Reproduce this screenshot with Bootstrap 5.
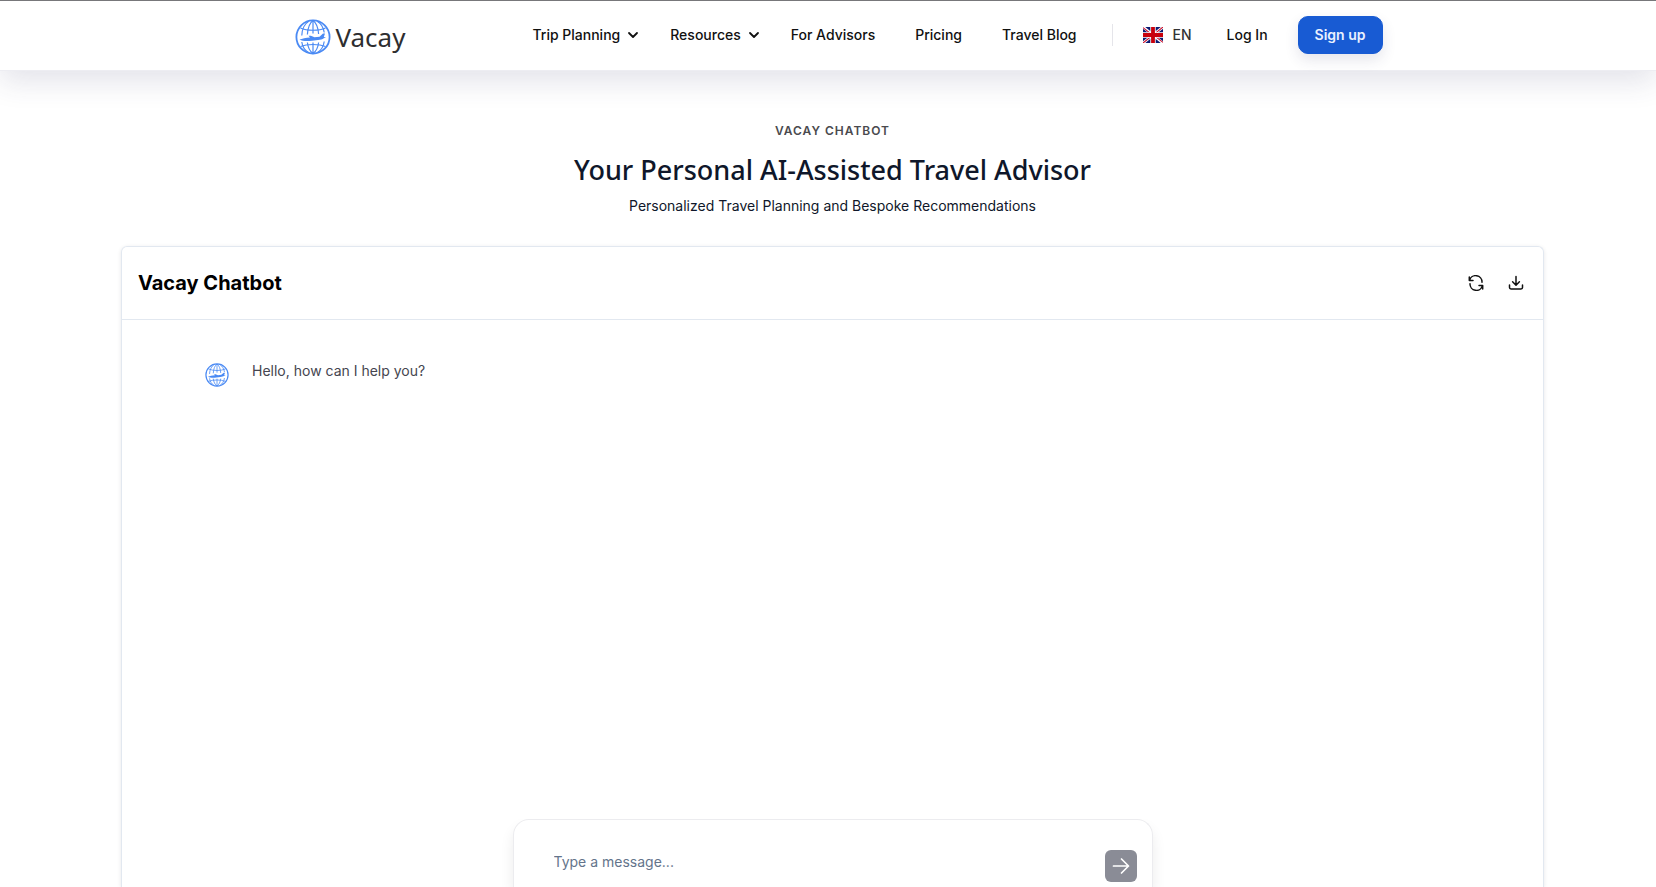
<!DOCTYPE html>
<html lang="en">
<head>
<meta charset="utf-8">
<meta name="viewport" content="width=device-width, initial-scale=1">
<title>Vacay Chatbot</title>
<link href="https://cdn.jsdelivr.net/npm/bootstrap@5.3.0/dist/css/bootstrap.min.css" rel="stylesheet">
<style>
  body { font-family: Inter, "Liberation Sans", sans-serif; font-size: 14px; line-height: 20px; color: #0f172a; background: #fff; }
  a, a:hover { color: #111; text-decoration: none; }
  .site-header { height: 71px; border-top: 1px solid #77777a; border-bottom: 1px solid #ededf2; padding: 0 0 2px 22px; font-weight: 500; box-shadow: 0 10px 30px rgba(50, 50, 100, .14); }
  .brand { margin: 5px 127px 0 0; gap: 4px; }
  .brand-name { font: 400 26px/36px "Noto Sans", sans-serif; color: #2e2e30; }
  .menu { gap: 40px; }
  .menu-item { gap: 7px; }
  .has-sub { margin-right: -9px; }
  .rule { width: 1px; height: 22px; background: #e5e5ea; margin: 0 30px 0 35px; }
  .lang { gap: 10px; margin-right: 35px; background: none; border: 0; padding: 0; font-weight: 500; color: #333; }
  .signup { --bs-btn-color: #eaf2ff; --bs-btn-bg: #185bd3; --bs-btn-border-color: #185bd3; --bs-btn-hover-color: #fff; --bs-btn-hover-bg: #124cb4; height: 38px; margin-left: 30px; padding: 0 16px; border-radius: 10px; font-size: 14px; font-weight: 600; box-shadow: 0 6px 14px rgba(50, 50, 100, .12); }
  .page-main { padding: 50px 112px 0 121px; }
  .eyebrow { font-size: 12px; line-height: 20px; font-weight: 600; letter-spacing: 1px; color: #4a4a4e; }
  .headline { font: 500 27px/36px "Noto Sans", sans-serif; margin: 11px 0 8px; color: #0f172a; }
  .chat { margin-top: 30px; border: 1px solid #e2e8f0; border-bottom: 0; border-radius: 6px 6px 0 0; box-shadow: 0 1px 4px rgba(15, 23, 42, .1); }
  .chat-head { height: 73px; padding: 0 15px 0 16px; border-bottom: 1px solid #e2e8f0; }
  .chat-title { font-size: 20px; line-height: 28px; font-weight: 700; color: #000; }
  .tool { width: 24px; height: 24px; padding: 0; border: 0; background: none; color: #111; }
  .message { padding: 41px 83px 0; gap: 23px; color: #45454f; }
  .avatar { margin-top: 2px; }
  .composer { width: 640px; max-width: 100%; height: 68px; padding: 20px 15px 0 24px; border: 1px solid #ececef; border-bottom: 0; border-radius: 16px 16px 0 0; box-shadow: 0 8px 14px rgba(0, 0, 0, .08); clip-path: inset(0 -20px 0 -20px); }
  .composer input { border: 0; outline: 0; padding: 0 16px; height: 42px; color: #0f172a; background: none; }
  .composer input::placeholder { color: #64748b; }
  .send { width: 32px; height: 32px; margin-top: 10px; padding: 0; border: 0; border-radius: 6px; background: #8a8c96; color: #fff; }
</style>
</head>
<body class="vh-100 d-flex flex-column overflow-hidden">
<svg class="d-none" aria-hidden="true">
  <symbol id="globe" viewBox="0 0 36 36">
    <g fill="none" stroke="#4a8af4" stroke-width="1.2">
      <circle cx="18" cy="18" r="16.6" stroke-width="1.8"/>
      <path d="M6.8 16.5C7 10 10 4.5 13.5 2.5M12.4 15.5C12.8 9 14.5 4 18 1.5C21.5 4 23.2 9 23.6 15M29.2 13.5C28.5 9 26 4.5 22.5 2.5"/>
      <path d="M6.8 23C7.5 28 10 31.5 13.5 33.5M12.4 23.5C13 28.5 15 32.5 18 34.5C21 32.5 23 28.5 23.6 23.5M29.2 22.5C28.5 27.5 26 31.5 22.5 33.5M18 1.5V14.5M18 23.5V34.5"/>
      <path d="M5.5 9C12 12 24 12 30.5 9M5.5 27.5C12 24.8 24 24.8 30.5 27.5"/>
    </g>
    <path d="M4.5 20.6C7 19.4 11 18.6 15 18.4L13.5 16.8H15.8L19.5 18.2L24.5 17.8L28 14.6H30L28.8 18L31 18.4L28.8 19.3C27.5 20.4 25.5 20.9 23 21.1L17 21.8C11.5 22.3 7.5 22.2 4.5 20.6Z" fill="#4a8af4"/>
  </symbol>
  <symbol id="chevron" viewBox="0 0 12 12"><path d="M2 4L6 8L10 4" fill="none" stroke="currentColor" stroke-width="1.8" stroke-linecap="round" stroke-linejoin="round"/></symbol>
</svg>

<header class="site-header d-flex align-items-center justify-content-center flex-shrink-0">
  <a class="brand d-flex align-items-center" href="#">
    <svg width="36" height="36" aria-hidden="true"><use href="#globe"/></svg>
    <span class="brand-name">Vacay</span>
  </a>
  <nav class="menu d-flex align-items-center text-nowrap" aria-label="Main">
    <a class="menu-item has-sub d-flex align-items-center" href="#">Trip Planning <svg width="12" height="12" aria-hidden="true"><use href="#chevron"/></svg></a>
    <a class="menu-item has-sub d-flex align-items-center" href="#">Resources <svg width="12" height="12" aria-hidden="true"><use href="#chevron"/></svg></a>
    <a href="#">For Advisors</a>
    <a href="#">Pricing</a>
    <a href="#">Travel Blog</a>
  </nav>
  <span class="rule"></span>
  <button class="lang d-flex align-items-center" type="button">
    <svg width="20" height="16" viewBox="0 0 20 16" aria-hidden="true">
      <path fill="#0a1a72" d="M0 0H20V16H0Z"/>
      <path d="M0 0L20 16M20 0L0 16" stroke="#fff" stroke-width="2.8"/>
      <path d="M0 .6L9 7.8M20 0L11 7.4M0 16L9 8.8M20 15.4L11 8.4" stroke="#c8102e" stroke-width="1.1"/>
      <path d="M10 0V16M0 8H20" stroke="#fff" stroke-width="5.4"/>
      <path d="M10 0V16M0 8H20" stroke="#c8000c" stroke-width="3.8"/>
    </svg>
    EN
  </button>
  <a class="text-nowrap" href="#">Log In</a>
  <a class="signup btn d-flex align-items-center text-nowrap" href="#">Sign up</a>
</header>

<main class="page-main d-flex flex-column flex-grow-1">
  <div class="text-center">
    <div class="eyebrow">VACAY CHATBOT</div>
    <h1 class="headline">Your Personal AI-Assisted Travel Advisor</h1>
    <p class="mb-0">Personalized Travel Planning and Bespoke Recommendations</p>
  </div>

  <section class="chat d-flex flex-column flex-grow-1">
    <div class="chat-head d-flex align-items-center">
      <h2 class="chat-title mb-0 me-auto">Vacay Chatbot</h2>
      <button class="tool me-3 d-flex align-items-center justify-content-center" type="button" aria-label="Restart chat">
        <svg width="16" height="16" viewBox="0 0 16 16" fill="none" stroke="currentColor" stroke-width="1.5" stroke-linecap="round" stroke-linejoin="round"><path d="M1.3 2V5.6H5M1.6 5.4A6.3 6.3 0 0 1 14 7.2M14.7 14V10.4H11M14.4 10.6A6.3 6.3 0 0 1 2 8.8"/></svg>
      </button>
      <button class="tool d-flex align-items-center justify-content-center" type="button" aria-label="Download chat">
        <svg width="16" height="16" viewBox="0 0 16 16" fill="none" stroke="currentColor" stroke-width="1.5" stroke-linecap="round" stroke-linejoin="round"><path d="M8 1.5V10M4.6 6.8L8 10.2L11.4 6.8M1.5 10V12.6Q1.5 14 3 14H13Q14.5 14 14.5 12.6V10"/></svg>
      </button>
    </div>
    <div class="message d-flex">
      <svg class="avatar" width="24" height="24" aria-hidden="true"><use href="#globe"/></svg>
      <p class="mb-0">Hello, how can I help you?</p>
    </div>
    <form class="composer d-flex mt-auto mx-auto">
      <input class="flex-grow-1" type="text" placeholder="Type a message..." aria-label="Type a message">
      <button class="send d-flex align-items-center justify-content-center" type="button" aria-label="Send">
        <svg width="20" height="20" viewBox="0 0 20 20" fill="none" stroke="currentColor" stroke-width="1.7" stroke-linecap="round" stroke-linejoin="round"><path d="M2.5 10H17.5M10.5 3L17.5 10L10.5 17"/></svg>
      </button>
    </form>
  </section>
</main>
<script src="https://cdn.jsdelivr.net/npm/bootstrap@5.3.0/dist/js/bootstrap.bundle.min.js"></script>
</body>
</html>
